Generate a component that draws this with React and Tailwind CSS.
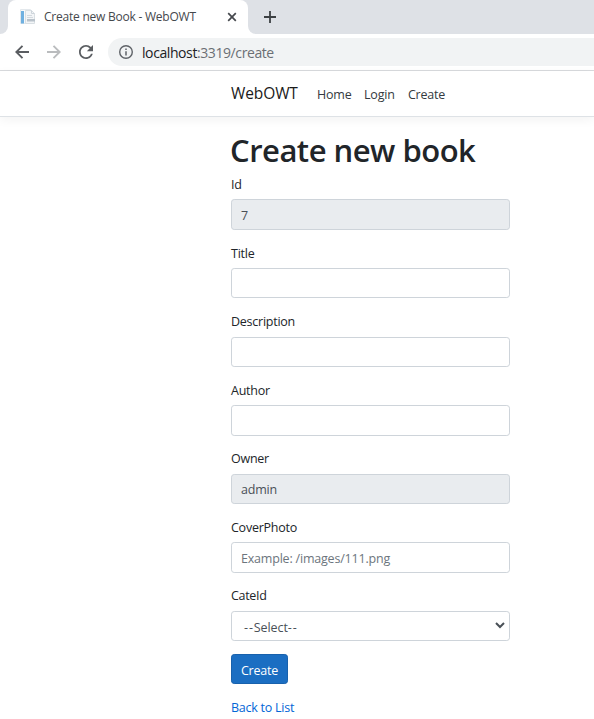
import React from "react";

const fields = [
  { label: "Id", value: "7", readOnly: true },
  { label: "Title", value: "" },
  { label: "Description", value: "" },
  { label: "Author", value: "" },
  { label: "Owner", value: "admin", readOnly: true },
  { label: "CoverPhoto", placeholder: "Example: /images/111.png" },
];

function FileIcon() {
  return (
    <svg width="16" height="16" viewBox="0 0 16 16" className="shrink-0">
      <path d="M.5.5h10v14H.5z" fill="#f6f8fa" stroke="#e3e8ec" />
      <path d="M1 2h3v12.500H1z" fill="#6fb0e0" />
      <path d="M5.500 1.500h6l3 3v10h-9z" fill="#f3f5f7" stroke="#d9dfe3" />
      <path d="M11.500 1.500v3h3" fill="none" stroke="#cdd4da" />
      <path d="M7 6.500h5M7 8.500h6" stroke="#d3d9de" />
      <path d="M7 10h8v2.500H7z" fill="#b9c2ca" />
    </svg>
  );
}

function TabStrip() {
  return (
    <div className="flex h-[34px] bg-[#dee1e6]">
      <div className="w-2 bg-white">
        <div className="h-full rounded-br-lg bg-[#dee1e6]" />
      </div>
      <div className="flex w-[240px] items-center rounded-t-lg bg-white pl-3 pr-[11px]">
        <FileIcon />
        <span className="ml-2 flex-1 whitespace-nowrap text-[12px] tracking-[-0.23px] text-[#45484d]">
          Create new Book - WebOWT
        </span>
        <svg width="10" height="10" viewBox="0 0 10 10" className="shrink-0">
          <path d="M1.200 1.200l7.600 7.600M8.800 1.200L1.200 8.800" stroke="#45484d" strokeWidth="1.700" />
        </svg>
      </div>
      <div className="w-2 bg-white">
        <div className="h-full rounded-bl-lg bg-[#dee1e6]" />
      </div>
      <svg width="12" height="12" viewBox="0 0 12 12" className="ml-2 mt-[11px]">
        <path d="M6 0v12M0 6h12" stroke="#3c4043" strokeWidth="1.800" />
      </svg>
    </div>
  );
}

function Toolbar() {
  return (
    <div className="flex h-[37px] items-start border-b border-[#d8dadd] bg-white pt-1">
      <div className="flex h-7 w-[108px] shrink-0 items-center pl-[15px]">
        <svg width="14" height="14" viewBox="0 0 14 14" fill="none" stroke="#5a5d61" strokeWidth="1.900">
          <path d="M14 7H1.500M7.500 .8L1.300 7l6.200 6.200" />
        </svg>
        <svg width="14" height="14" viewBox="0 0 14 14" fill="none" stroke="#babcbe" strokeWidth="1.900" className="ml-[18px]">
          <path d="M0 7h12.500M6.500 .8L12.700 7l-6.200 6.200" />
        </svg>
        <svg width="14" height="14" viewBox="4 4 16 16" fill="#5a5d61" className="ml-[18px]">
          <path d="M17.650 6.350C16.200 4.900 14.210 4 12 4c-4.420 0-7.990 3.580-7.990 8s3.570 8 7.990 8c3.730 0 6.840-2.550 7.730-6h-2.080c-.82 2.330-3.040 4-5.650 4-3.310 0-6-2.690-6-6s2.690-6 6-6c1.660 0 3.140.69 4.220 1.780L13 11h7V4l-2.350 2.350z" />
        </svg>
      </div>
      <div className="flex h-7 flex-1 items-center rounded-l-full bg-[#f1f3f4] pl-[11px]">
        <svg width="14" height="14" viewBox="0 0 14 14" fill="none" stroke="#5f6368">
          <circle cx="7" cy="7" r="6.300" strokeWidth="1.400" />
          <path d="M7 6.200v4.300M7 3.500v1.500" strokeWidth="1.500" />
        </svg>
        <span className="ml-[9px] whitespace-nowrap text-[14px] tracking-[-0.41px] text-[#6b6f74]">
          <span className="text-[#202124]">localhost</span>:3319/create
        </span>
      </div>
    </div>
  );
}

export default function App() {
  return (
    <div className="h-[719px] w-[594px] overflow-hidden bg-white font-['Open_Sans','Noto_Sans',sans-serif] text-[12.5px] text-[#212529]">
      <TabStrip />
      <Toolbar />
      <nav className="flex h-[46px] items-center border-b border-[#dee2e6] pl-[231px] shadow-[0_3px_10px_rgba(0,0,0,0.05)]">
        <a className="w-[86px] whitespace-nowrap text-[15.5px] tracking-[-0.1px] text-[#1a1a1a]">WebOWT</a>
        <a className="w-[47px] whitespace-nowrap pt-[3px] tracking-[-0.2px] text-[#343a40]">Home</a>
        <a className="w-[44px] whitespace-nowrap pt-[3px] tracking-[-0.2px] text-[#343a40]">Login</a>
        <a className="whitespace-nowrap pt-[3px] tracking-[-0.25px] text-[#343a40]">Create</a>
      </nav>
      <main className="ml-[231px] w-[279px] pt-[14px]">
        <h1 className="-ml-px h-[43px] whitespace-nowrap text-[31px] font-semibold leading-[38px] tracking-[-0.5px]">
          Create new book
        </h1>
        <form>
          {fields.map((f) => (
            <div key={f.label} className="mb-[12.8px]">
              <label className="mb-[6.4px] block h-[19px] leading-[21px] tracking-[-0.25px]">{f.label}</label>
              <input
                readOnly={f.readOnly}
                defaultValue={f.value}
                placeholder={f.placeholder}
                className={
                  "block h-[30.4px] w-full rounded-[3.2px] border border-[#ced4da] px-[9px] pt-[1.5px] tracking-[-0.2px] text-[#495057] outline-none placeholder:text-[#6c757d] " +
                  (f.readOnly ? "bg-[#e9ecef]" : "bg-white")
                }
              />
            </div>
          ))}
          <label className="mb-[6.4px] block h-[19px] leading-[21px] tracking-[-0.3px]">CateId</label>
          <div className="flex h-[30.4px] items-center justify-between rounded-[3.2px] border border-[#ced4da] pl-[12px] pr-[4px] pt-[4px] text-[#495057]">
            <span>
              <span className="tracking-[0.9px]">--</span>
              <span className="tracking-[-0.1px]">Select</span>
              <span className="tracking-[0.9px]">--</span>
            </span>
            <svg width="10" height="7" viewBox="0 0 10 7" className="-mt-[5px]">
              <path d="M1 1l4 4 4-4" fill="none" stroke="#495057" strokeWidth="2" />
            </svg>
          </div>
          <button type="button" className="mt-[12.8px] flex h-[30.4px] w-[57px] items-center justify-center rounded-[3.2px] border border-[#1861ac] bg-[#1b6ec2] pt-[4px] tracking-[-0.2px] text-white">
            Create
          </button>
        </form>
        <a className="mt-[13px] block leading-[21px] tracking-[-0.25px] text-[#0366d6]">Back to List</a>
      </main>
    </div>
  );
}
